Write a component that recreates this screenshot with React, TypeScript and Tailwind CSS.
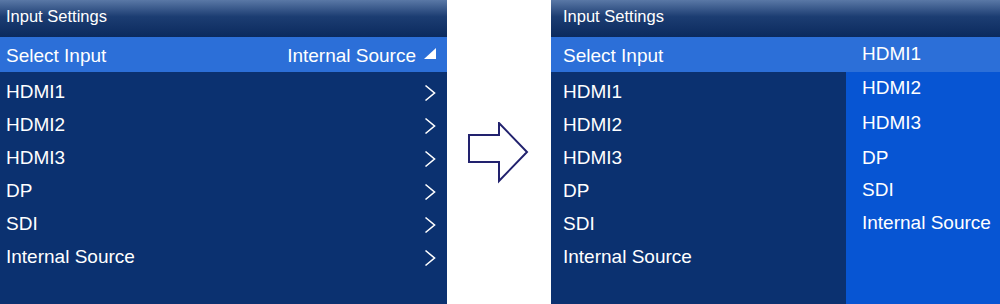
import React from "react";

const items = ["HDMI1", "HDMI2", "HDMI3", "DP", "SDI", "Internal Source"];
const dropRows: { t: string; h: string }[] = [
  { t: "HDMI2", h: "h-[33px]" },
  { t: "HDMI3", h: "h-[37px]" },
  { t: "DP", h: "h-[32px]" },
  { t: "SDI", h: "h-[33px]" },
  { t: "Internal Source", h: "h-[32px]" },
];

function Chevron() {
  return (
    <svg width="12" height="18" viewBox="0 0 12 18" className="shrink-0">
      <path d="M1.5 1.5 L10.5 9 L1.5 16.5" fill="none" stroke="white" strokeWidth="1.6" />
    </svg>
  );
}

function Header({ pad }: { pad: string }) {
  return (
    <div
      className={`h-[37px] flex items-center pb-[4px] ${pad} text-[16.5px] text-white bg-[linear-gradient(to_bottom,#5a78a6_0%,#1c3d72_45%,#0b2a5e_100%)]`}
    >
      Input Settings
    </div>
  );
}

export default function App() {
  return (
    <div
      className="w-[1000px] h-[304px] bg-white flex overflow-hidden"
      style={{ fontFamily: '"Liberation Sans", Arial, sans-serif' }}
    >
      {/* Left panel */}
      <div className="w-[447px] h-full bg-[#0b3170] flex flex-col">
        <Header pad="px-[6px]" />
        <div className="h-[35px] bg-[#2c6fd8] flex items-center justify-between pt-[3px] pl-[6px] pr-[11px] text-[19px] text-white">
          <span>Select Input</span>
          <span className="flex items-center gap-[8px]">
            <span>Internal Source</span>
            <svg width="12" height="12" viewBox="0 0 12 12" className="mb-[4px]">
              <path d="M12 0 L12 11 L0 11 Z" fill="white" />
            </svg>
          </span>
        </div>
        <div className="pt-[4px] flex flex-col">
          {items.map((t) => (
            <div key={t} className="h-[33px] flex items-center justify-between pl-[6px] pr-[11px] text-[19px] text-white">
              <span>{t}</span>
              <Chevron />
            </div>
          ))}
        </div>
      </div>

      {/* Middle arrow */}
      <div className="w-[104px] h-full flex items-start justify-center pt-[122px]">
        <svg width="62" height="62" viewBox="0 0 62 62">
          <path
            d="M1 13 L31 13 L31 1 L59 30 L31 59 L31 40 L1 40 Z"
            fill="white"
            stroke="#22226e"
            strokeWidth="2"
            strokeLinejoin="miter"
          />
        </svg>
      </div>

      {/* Right panel */}
      <div className="w-[449px] h-full bg-[#0b3170] flex flex-col relative">
        <Header pad="px-[12px]" />
        <div className="h-[35px] bg-[#2c6fd8] flex items-center pt-[3px] px-[12px] text-[19px] text-white">
          <span>Select Input</span>
        </div>
        <div className="pt-[4px] flex flex-col">
          {items.map((t) => (
            <div key={t} className="h-[33px] flex items-center px-[12px] text-[19px] text-white">
              <span>{t}</span>
            </div>
          ))}
        </div>
        {/* Dropdown */}
        <div className="absolute left-[295px] top-[37px] right-0 bottom-0 bg-[#0755d3] flex flex-col">
          <div className="h-[35px] bg-[#2c6fd8] flex items-center pl-[16px] text-[19px] text-white">
            <span>HDMI1</span>
          </div>
          {dropRows.map((r) => (
            <div key={r.t} className={`${r.h} flex items-center pl-[16px] text-[19px] text-white`}>
              <span>{r.t}</span>
            </div>
          ))}
        </div>
      </div>
    </div>
  );
}
